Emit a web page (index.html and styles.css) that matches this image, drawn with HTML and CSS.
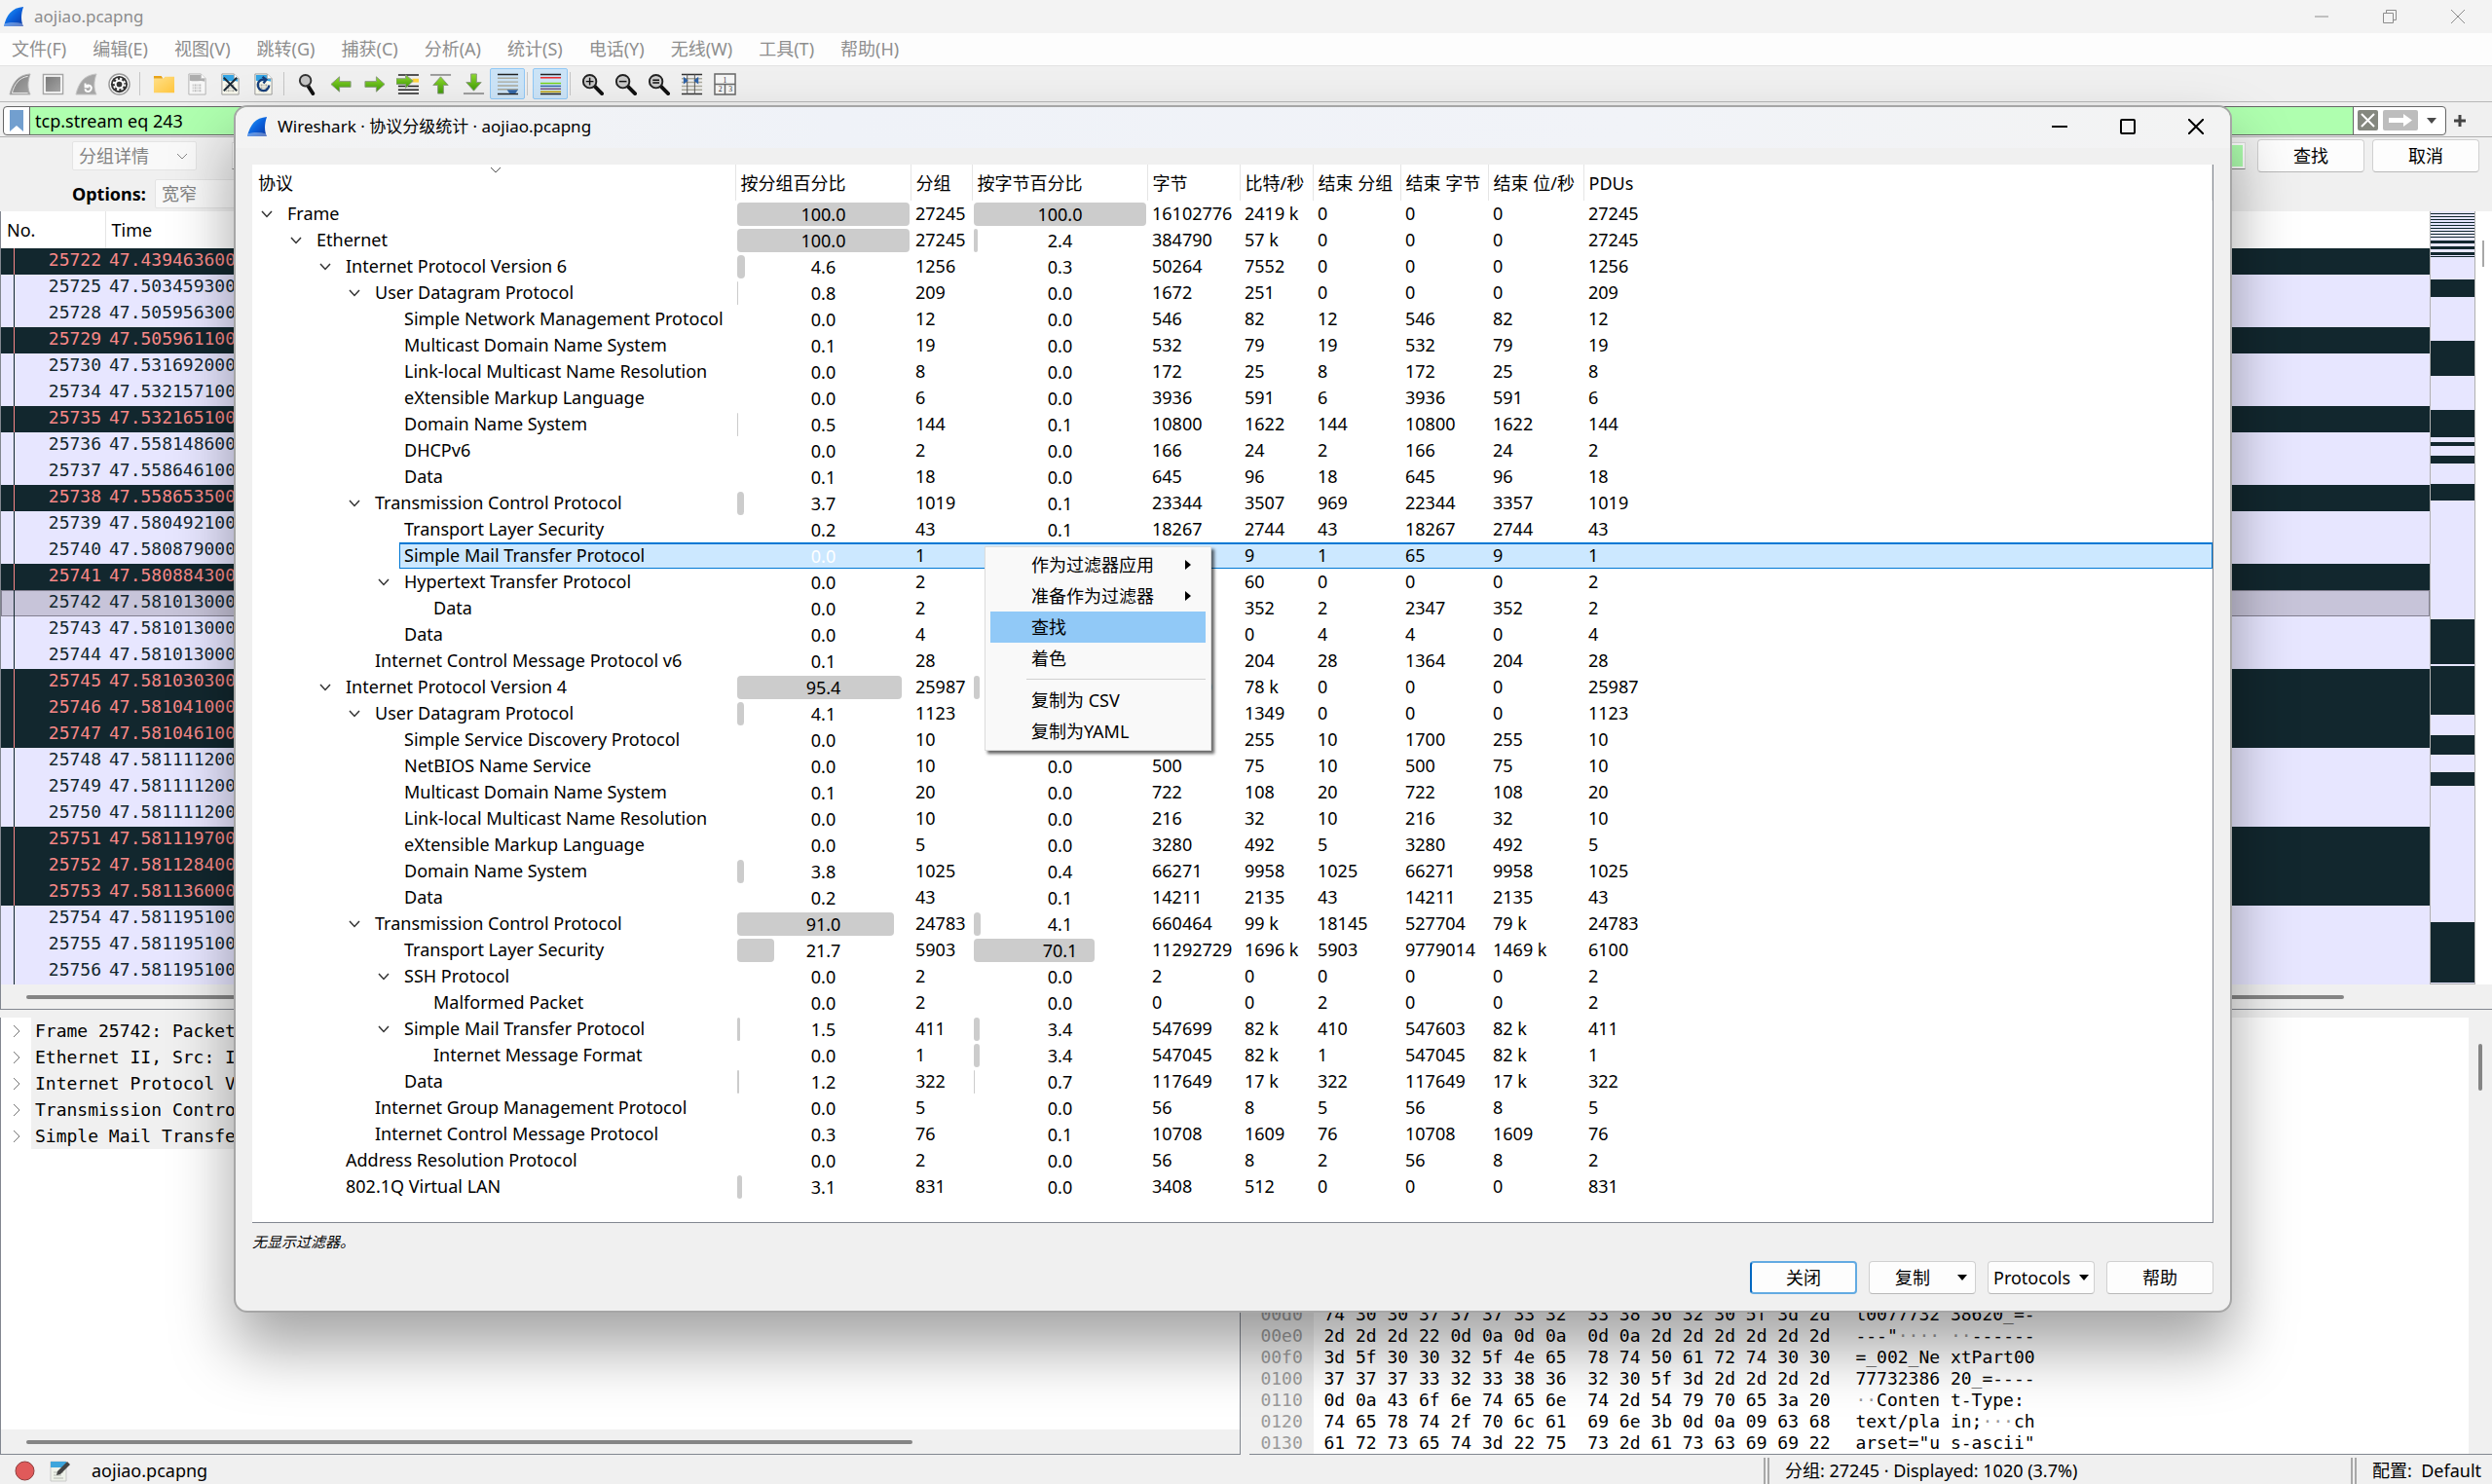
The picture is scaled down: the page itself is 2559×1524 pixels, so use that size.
FILE: index.html
```html
<!DOCTYPE html>
<html lang="zh-CN">
<head>
<meta charset="utf-8">
<title>aojiao.pcapng</title>
<link rel="stylesheet" href="styles.css">
<script src="app.js" defer></script>
</head>
<body>
<svg class="defs" width="0" height="0" aria-hidden="true">
  <defs>
    <linearGradient id="blue" x1="0" y1="0" x2="1" y2="1"><stop offset="0" stop-color="#29a8ff"/><stop offset=".5" stop-color="#0b62dd"/><stop offset="1" stop-color="#0b35a0"/></linearGradient>
    <linearGradient id="green" x1="0" y1="0" x2="0" y2="1"><stop offset="0" stop-color="#8edb2c"/><stop offset="1" stop-color="#3f9a08"/></linearGradient>
    <linearGradient id="gold" x1="0" y1="0" x2="1" y2="1"><stop offset="0" stop-color="#ffe08a"/><stop offset="1" stop-color="#ffc53d"/></linearGradient>
    <linearGradient id="grey" x1="0" y1="0" x2="1" y2="1"><stop offset="0" stop-color="#7a7a7a"/><stop offset="1" stop-color="#a4a4a4"/></linearGradient>
    <symbol id="fin" viewBox="0 0 24 24"><path d="M23 1C10 2 4 10 1 23h22c-3-6-3-14 0-22z" fill="url(#blue)"/><path d="M2 20c6-2 13-2 20 0l1 3H1z" fill="#fff" opacity=".35"/></symbol>
    <symbol id="mag" viewBox="0 0 24 24"><path d="M14 14l8 8" stroke="#111" stroke-width="4" stroke-linecap="round"/><circle cx="9" cy="9" r="7" fill="#c9c9c9" stroke="#222" stroke-width="2"/></symbol>
    <symbol id="doc" viewBox="0 0 24 24"><path d="M3 1h13l5 5v17H3z" fill="#fbfbef" stroke="#9a9a9a"/><path d="M4 2h12l4 4v3c-5-2-10 1-16-1z" fill="#35a5e5"/><path d="M16 1v5h5" fill="#fff" stroke="#aaa"/><path d="M7 13h10M7 16h10M7 19h10" stroke="#a8a8a0" stroke-width="2" stroke-dasharray="1 1 2 1"/></symbol>
  </defs>
</svg>

<main class="window">
  <header class="titlebar">
    <svg class="fin"><use href="#fin"/></svg>
    <h1>aojiao.pcapng</h1>
    <div class="controls">
      <button aria-label="最小化"><svg width="16" height="16" viewBox="0 0 16 16"><path d="M1 8h14"/></svg></button>
      <button aria-label="还原"><svg width="16" height="16" viewBox="0 0 16 16"><path d="M1.5 4.500h10v10h-10zM4.500 4V1.500h10v10H12"/></svg></button>
      <button aria-label="关闭"><svg width="16" height="16" viewBox="0 0 16 16"><path d="M1 1l14 14M15 1L1 15"/></svg></button>
    </div>
  </header>
  <nav class="menubar">
    <a href="#">文件(F)</a><a href="#">编辑(E)</a><a href="#">视图(V)</a><a href="#">跳转(G)</a><a href="#">捕获(C)</a><a href="#">分析(A)</a><a href="#">统计(S)</a><a href="#">电话(Y)</a><a href="#">无线(W)</a><a href="#">工具(T)</a><a href="#">帮助(H)</a>
  </nav>
  <div class="toolbar">
    <button aria-label="开始捕获"><svg viewBox="0 0 24 24"><path d="M23 1C10 2 4 10 1 23h22c-3-6-3-14 0-22z" fill="url(#grey)" stroke="#b4b4b4"/><path d="M20.500 3.500C11 5 6 12 3.500 21.500h17" fill="none" stroke="#eee"/></svg></button>
    <button aria-label="停止捕获"><svg viewBox="0 0 24 24"><path d="M1.500 1.500h21v21h-21z" fill="#fff" stroke="#a6a6a6" stroke-width="1.500"/><path d="M4 4h16v16H4z" fill="url(#grey)"/></svg></button>
    <button aria-label="重新捕获"><svg viewBox="0 0 24 24"><path d="M23 1C10 2 4 10 1 23h22c-3-6-3-14 0-22z" fill="#a6a6a6" stroke="#c4c4c4"/><path d="M11 11v4h4M11 15c3-4 8-1 6 3-2 3-6 2-6-1" fill="none" stroke="#fff" stroke-width="2"/></svg></button>
    <button aria-label="捕获选项"><svg viewBox="0 0 24 24"><circle cx="12" cy="12" r="11" fill="#fff" stroke="#999" stroke-width="1.500"/><circle cx="12" cy="12" r="9" fill="#333"/><circle cx="12" cy="12" r="4" fill="none" stroke="#fff" stroke-width="2"/><circle cx="12" cy="12" r="6" fill="none" stroke="#fff" stroke-width="2" stroke-dasharray="2.400 2.300"/></svg></button>
    <i class="sep"></i>
    <button aria-label="打开"><svg viewBox="0 0 24 24"><path d="M1 3h8l2 3H1z" fill="#e8a317"/><path d="M1 6l10 0 2-2h10v17H1z" fill="url(#gold)"/></svg></button>
    <button aria-label="保存"><svg class="faded" viewBox="0 0 24 24"><use href="#doc"/></svg></button>
    <button aria-label="关闭文件"><svg viewBox="0 0 24 24"><use href="#doc"/><path d="M5 5l14 14M19 5L5 19" stroke="#1c2b38" stroke-width="2"/></svg></button>
    <button aria-label="重新加载"><svg viewBox="0 0 24 24"><use href="#doc"/><path d="M18 13a6 6 0 1 1-5-6M11 4l4 3-3 4" fill="none" stroke="#173f7c" stroke-width="2.500"/></svg></button>
    <i class="sep"></i>
    <button aria-label="查找分组"><svg viewBox="0 0 24 24"><path d="M12 14l5 8" stroke="#111" stroke-width="4" stroke-linecap="round"/><circle cx="9" cy="8" r="6" fill="#c4c4c4" stroke="#333" stroke-width="2"/></svg></button>
    <button aria-label="后退"><svg viewBox="0 0 24 24"><path d="M1 12l9-8v5h12v6H10v5z" fill="url(#green)" stroke="#8a9a80"/></svg></button>
    <button aria-label="前进"><svg viewBox="0 0 24 24"><path d="M23 12l-9-8v5H2v6h12v5z" fill="url(#green)" stroke="#8a9a80"/></svg></button>
    <button aria-label="转到分组"><svg viewBox="0 0 24 24"><path d="M2 2h22M2 14h22M2 18h22M2 22h22" stroke="#222" stroke-width="1.500"/><path d="M17 6h7v4h-7z" fill="#ffd33d"/><path d="M18 8.500L10 2v4H0v6h10v4z" fill="url(#green)" stroke="#8a9a80"/></svg></button>
    <button aria-label="第一个分组"><svg viewBox="0 0 24 24"><path d="M1 2h22" stroke="#999" stroke-width="2"/><path d="M12 4l8 9h-5v9H9v-9H4z" fill="url(#green)" stroke="#8a9a80"/></svg></button>
    <button aria-label="最后一个分组"><svg viewBox="0 0 24 24"><path d="M1 22h22" stroke="#999" stroke-width="2"/><path d="M12 19l8-9h-5V1H9v9H4z" fill="url(#green)" stroke="#8a9a80"/></svg></button>
    <button class="on" aria-label="自动滚动"><svg viewBox="0 0 24 24"><path d="M1 1.500h22M1 22.500h22" stroke="#222" stroke-width="1.500"/><path d="M1 5.500h22M1 9.500h22M1 13.500h22M1 17.500h22" stroke="#aaa99c" stroke-width="1.500"/><path d="M11 18h12l-3 4h-6z" fill="#3465a4"/></svg></button>
    <i class="sep narrow"></i>
    <button class="on" aria-label="着色分组"><svg viewBox="0 0 24 24"><path d="M1 1.500h22M1 22.500h22" stroke="#222" stroke-width="1.500"/><path d="M1 5h22" stroke="#e22" stroke-width="1.500"/><path d="M1 11h22" stroke="#73d216" stroke-width="1.500"/><path d="M1 14h22" stroke="#3465a4" stroke-width="1.500"/><path d="M1 17h22" stroke="#75507b" stroke-width="1.500"/><path d="M1 20h22" stroke="#c4a000" stroke-width="1.500"/></svg></button>
    <i class="sep narrow"></i>
    <button aria-label="放大"><svg viewBox="0 0 24 24"><use href="#mag"/><path d="M5 9h8M9 5v8" stroke="#111" stroke-width="1.500"/></svg></button>
    <button aria-label="缩小"><svg viewBox="0 0 24 24"><use href="#mag"/><path d="M5 9h8" stroke="#111" stroke-width="1.500"/></svg></button>
    <button aria-label="原始大小"><svg viewBox="0 0 24 24"><use href="#mag"/><path d="M5.500 7.500h7M5.500 10.500h7" stroke="#111" stroke-width="1.500"/></svg></button>
    <button aria-label="调整列宽"><svg viewBox="0 0 24 24"><path d="M1 1.500h22M1 22.500h22" stroke="#333" stroke-width="1.500"/><path d="M1 6h22M1 10h22M1 14h22M1 18h22" stroke="#aaa99c" stroke-width="1.500"/><path d="M7 1v22M15 1v22" stroke="#555"/><path d="M3 4l5 4-5 4zM19 4l-5 4 5 4z" fill="#2f62a8"/></svg></button>
    <button aria-label="布局"><svg viewBox="0 0 24 24"><path d="M1 1h22v22H1zM1 12h22M12 12v11" fill="#f6f6f6" stroke="#666" stroke-width="1.500"/><g font-size="8" font-family="Liberation Serif, serif" fill="#333"><text x="10" y="10">1</text><text x="5" y="20">2</text><text x="16" y="20">3</text></g></svg></button>
  </div>

  <div class="filterbar">
    <div class="filterfield">
      <button class="bookmark" aria-label="书签"><svg width="14" height="22" viewBox="0 0 14 22"><path d="M0 0h14v22l-7-6-7 6z" fill="#729fcf"/></svg></button>
      <input type="text" value="tcp.stream eq 243" aria-label="显示过滤器">
      <button class="clear" aria-label="清除"><svg width="21" height="21" viewBox="0 0 21 21"><rect width="21" height="21" rx="2" fill="#85887f"/><path d="M4 4l13 13M17 4L4 17" stroke="#fff" stroke-width="2"/></svg></button>
      <button class="apply" aria-label="应用"><svg width="36" height="21" viewBox="0 0 36 21"><rect width="36" height="21" rx="2" fill="#bdbdbd"/><path d="M6 8h15V4l9 6.500-9 6.500v-4H6z" fill="#fff"/></svg></button>
      <button class="history" aria-label="历史"><svg width="10" height="6" viewBox="0 0 10 6"><path d="M0 0h10L5 6z" fill="#4a4a4a"/></svg></button>
    </div>
    <button class="plus" aria-label="添加"><svg width="12" height="12" viewBox="0 0 12 12"><path d="M6 0v12M0 6h12" stroke="#444" stroke-width="3"/></svg></button>
  </div>

  <div class="findbar">
    <div class="findrow">
      <select aria-label="查找范围" disabled><option>分组详情</option></select>
      <input class="findtext" type="text" aria-label="查找内容">
      <button class="btn">查找</button>
      <button class="btn">取消</button>
    </div>
    <div class="findrow">
      <label for="width-opt">Options:</label>
      <select id="width-opt" disabled><option>宽窄</option></select>
    </div>
  </div>

  <section class="packets">
    <div class="packetbody">
      <table class="packetlist">
        <thead><tr><th>No.</th><th>Time</th></tr></thead>
        <tbody id="packet-rows"></tbody>
      </table>
      <svg class="minimap" viewBox="0 0 45 793" preserveAspectRatio="none"><g fill="#12272e" id="minimap"></g></svg>
      <div class="vscroll"><i></i></div>
    </div>
    <div class="hscroll wide"><i></i></div>
  </section>

  <div class="panes">
    <section class="details">
      <ul>
        <li><span>Frame 25742: Packet</span></li>
        <li><span>Ethernet II, Src: In</span></li>
        <li><span>Internet Protocol Ve</span></li>
        <li><span>Transmission Control</span></li>
        <li><span>Simple Mail Transfer</span></li>
      </ul>
      <div class="hscroll short"><i></i></div>
    </section>
    <section class="bytes">
      <div class="hex" id="hex"></div>
      <div class="hexscroll"><i></i></div>
    </section>
  </div>

  <footer class="status">
    <svg width="21" height="21" viewBox="0 0 21 21"><circle cx="10.500" cy="10.500" r="9.500" fill="#e05a5a" stroke="#8f3b3b"/></svg>
    <svg width="22" height="22" viewBox="0 0 22 22"><path d="M1 1h16v20H1z" fill="#eef2ea" stroke="#c9c9c9"/><path d="M1 1h16v6H1z" fill="#3da5dc"/><path d="M4 12h10M4 15h8M4 18h10" stroke="#b4b8b0"/><path d="M7 15l1-4L18 1l3 3-10 10z" fill="#444"/></svg>
    <span class="file">aojiao.pcapng</span>
    <span class="counts">分组: 27245 · Displayed: 1020 (3.7%)</span>
    <span class="profile">配置:&nbsp; Default</span>
  </footer>
</main>

<div class="dialog" role="dialog" aria-labelledby="dlg-title">
  <header class="dlgtitle">
    <svg class="fin"><use href="#fin"/></svg>
    <h2 id="dlg-title">Wireshark · 协议分级统计 · aojiao.pcapng</h2>
    <div class="controls">
      <button aria-label="最小化"><svg width="16" height="16" viewBox="0 0 16 16"><path d="M0 8h16"/></svg></button>
      <button aria-label="最大化"><svg width="16" height="16" viewBox="0 0 16 16"><rect x="1" y="1" width="14" height="14" rx="1"/></svg></button>
      <button aria-label="关闭"><svg width="16" height="16" viewBox="0 0 16 16"><path d="M0 0l16 16M16 0L0 16"/></svg></button>
    </div>
  </header>
  <div class="dlgbody">
    <div class="tree">
      <table class="proto">
        <colgroup><col class="c-name"><col class="c-bar"><col class="c-pkt"><col class="c-bar"><col class="c-bytes"><col class="c-bits"><col class="c-end"><col class="c-end"><col class="c-endbits"><col></colgroup>
        <thead><tr><th class="sorted">协议<svg width="12" height="7" viewBox="0 0 12 7"><path d="M1 1l5 5 5-5" fill="none" stroke="#555"/></svg></th><th>按分组百分比</th><th>分组</th><th>按字节百分比</th><th>字节</th><th>比特/秒</th><th>结束 分组</th><th>结束 字节</th><th>结束 位/秒</th><th>PDUs</th></tr></thead>
        <tbody id="proto-rows"></tbody>
      </table>
    </div>
    <p class="note">无显示过滤器。</p>
    <div class="actions">
      <button class="btn primary">关闭</button>
      <button class="btn split"><span>复制</span><svg width="10" height="6" viewBox="0 0 10 6"><path d="M0 0h10L5 6z"/></svg></button>
      <button class="btn tight"><span>Protocols</span><svg width="10" height="6" viewBox="0 0 10 6"><path d="M0 0h10L5 6z"/></svg></button>
      <button class="btn">帮助</button>
    </div>
  </div>
</div>

<div class="ctx" role="menu">
  <button role="menuitem">作为过滤器应用<svg width="6" height="10" viewBox="0 0 6 10"><path d="M0 0v10l6-5z"/></svg></button>
  <button role="menuitem">准备作为过滤器<svg width="6" height="10" viewBox="0 0 6 10"><path d="M0 0v10l6-5z"/></svg></button>
  <button role="menuitem" class="active">查找</button>
  <button role="menuitem">着色</button>
  <hr>
  <button role="menuitem">复制为 CSV</button>
  <button role="menuitem">复制为YAML</button>
</div>
</body>
</html>
```

FILE: styles.css
```css
* { box-sizing: border-box; }
html, body { height: 100%; }
body {
  margin: 0;
  overflow: hidden;
  background: #f0f0f0;
  color: #000;
  font-family: "Noto Sans", "Noto Sans CJK SC", sans-serif;
  font-size: 18px;
  line-height: 26px;
}
button, input, select { font: inherit; color: inherit; margin: 0; padding: 0; border: 0; background: none; }
h1, h2, p, ul { margin: 0; padding: 0; font-weight: 400; }
.defs { position: absolute; }
.fin { width: 22px; height: 24px; }

.window { display: flex; flex-direction: column; height: 100vh; }

.titlebar, .dlgtitle { display: flex; align-items: center; }
.titlebar { height: 34px; padding-left: 3px; gap: 10px; background: #f3f3f3; color: #8c8c8c; }
.titlebar h1, .dlgtitle h2 { flex: 1; font-size: 17px; line-height: 26px; }
.controls { display: flex; }
.controls button { display: flex; width: 70px; justify-content: center; }
.controls svg { fill: none; stroke: currentColor; stroke-width: 1; }
.dialog .controls svg { stroke-width: 2; }

.menubar { display: flex; gap: 27px; height: 33px; padding: 3px 12px; background: #fdfdfd; }
.menubar a { color: #8e8e8e; text-decoration: none; }

.toolbar { display: flex; align-items: center; height: 38px; padding-left: 3px; background: #f0f0f0; border-bottom: 1px solid #b8b8b8; border-top: 1px solid #e3e3e3; }
.toolbar button { display: flex; flex: none; width: 34px; height: 34px; align-items: center; justify-content: center; }
.toolbar svg { width: 23px; height: 23px; }
.toolbar .faded { filter: grayscale(1); opacity: .7; }
.toolbar .on { width: 36px; height: 32px; background: #cce4f7; border: 1px solid #90c8f6; border-radius: 2px; }
.sep { width: 12px; height: 24px; background: linear-gradient(#c6c6c6, #c6c6c6) 4px center / 1px 100% no-repeat; }
.sep.narrow { width: 8px; background-position-x: 2px; }

.filterbar { display: flex; align-items: center; height: 36px; padding: 4px 27px 2px 3px; gap: 8px; border-bottom: 1px solid #b0b0b0; }
.filterfield { display: flex; flex: 1; align-items: center; height: 30px; background: #fff; border: 1px solid #666; border-radius: 4px; overflow: hidden; }
.filterfield input { flex: 1; height: 100%; padding: 0 5px; background: #afffaf; border: solid #666; border-width: 0 1px; }
.filterfield button { display: flex; justify-content: center; }
.bookmark { width: 26px; }
.clear { margin-left: 4px; }
.apply { margin-left: 5px; }
.history { width: 28px; }
.plus { display: flex; }

.findbar { display: flex; flex-direction: column; gap: 6px; height: 76px; padding: 1px 13px 0 74px; }
.findrow { display: flex; align-items: center; }
.findrow:first-child { height: 36px; gap: 8px; }
.findrow select { appearance: none; width: 128px; height: 30px; padding: 0 6px; background: #f9f9f9 url("data:image/svg+xml,%3Csvg xmlns='http://www.w3.org/2000/svg' width='12' height='7'%3E%3Cpath d='M1 1l5 5 5-5' fill='none' stroke='%23888'/%3E%3C/svg%3E") right 8px center no-repeat; border: 1px solid #e4e4e4; border-radius: 2px; color: #838383; opacity: 1; }
.findrow label { width: 85px; font-weight: 700; }
.findtext { flex: 1; height: 28px; margin: 0 4px 0 28px; background: #afffaf; border: 1px solid #ddd; border-bottom-color: #888; outline: 2px solid #fff; outline-offset: -3px; }
.btn { width: 110px; height: 34px; background: #fdfdfd; border: 1px solid #d0d0d0; border-bottom-color: #b8b8b8; border-radius: 4px; }

.packets { border: 1px solid #828790; border-width: 0 0 1px 1px; }
.packetbody { display: flex; background: #fff; }
.packetlist { flex: 1; border-collapse: collapse; table-layout: fixed; }
.packetlist th { height: 38px; padding: 0 6px; text-align: left; font-weight: 400; }
.packetlist th:first-child { width: 107px; border-right: 1px solid #e5e5e5; }
.packetlist td { height: 27px; padding: 0 4px 4px; font: 18px/22px "DejaVu Sans Mono", monospace; white-space: nowrap; }
.packetlist td:first-child { text-align: right; background: linear-gradient(currentColor, currentColor) 13px 0 / 1px 100% no-repeat; }
.packetlist tr.lite { background: #e7e6ff; color: #12272e; }
.packetlist tr.dark { background: #12272e; color: #f78787; }
.packetlist tr.current { background: #c7c4d9; box-shadow: inset 0 0 0 1px #827f90; }
.minimap { width: 47px; flex: none; height: 794px; background: #e7e6ff; border: 1px solid #b0b0b0; border-top: 0; }
.vscroll { width: 17px; padding: 30px 0 0 7px; }
.vscroll i { display: block; width: 2px; height: 27px; background: #a8a8a8; }
.hscroll { display: flex; flex: none; align-items: center; height: 25px; padding-left: 26px; background: #f0f0f0; }
.hscroll i { height: 4px; border-radius: 2px; background: #858585; }
.wide i { width: 94%; }
.short i { width: 73%; }

.panes { display: flex; flex: 1; min-height: 0; gap: 9px; padding-top: 8px; }
.details { display: flex; flex-direction: column; width: 49.8%; background: #fff; border: 1px solid #828790; border-top: 0; }
.details ul { flex: 1; min-height: 0; list-style: none; }
.details li { display: flex; font: 18px/27px "DejaVu Sans Mono", monospace; background: url("data:image/svg+xml,%3Csvg xmlns='http://www.w3.org/2000/svg' width='8' height='14'%3E%3Cpath d='M1 1l6 6-6 6' fill='none' stroke='%23777'/%3E%3C/svg%3E") 12px center no-repeat; padding-left: 31px; }
.details span { flex: 1; padding-left: 4px; background: #f0f0f0; }
.bytes { display: flex; flex: 1; background: #fff; border-bottom: 1px solid #828790; }
.hex { display: flex; flex: 1; flex-direction: column; justify-content: flex-end; background: linear-gradient(#f0f0f0, #f0f0f0) 0 0 / 66px 100% no-repeat; }
.hexrow { display: grid; grid-template-columns: 66px 556px 1fr; font: 18px/22px "DejaVu Sans Mono", monospace; white-space: pre; }
.hexrow span:first-child { padding-left: 11px; color: #9a9a9a; }
.hexrow span:nth-child(2) { padding-left: 10px; }
.hexrow i { font-style: normal; color: #999; }
.hexscroll { width: 24px; padding: 27px 0 0 10px; background: #f0f0f0; }
.hexscroll i { display: block; width: 4px; height: 48px; border-radius: 2px; background: #858585; }

.status { display: flex; flex: none; align-items: center; height: 30px; padding: 3px 0 0 15px; gap: 15px; line-height: 27px; }
.status .file { flex: 1; padding-left: 6px; }
.counts, .profile { flex: none; padding-left: 16px; border-left: 6px double #a8a8a8; white-space: nowrap; }
.counts { width: 588px; }
.profile { width: 145px; }

.dialog { position: absolute; top: 108px; left: 240px; right: 267px; border: 2px solid #a6a6a6; border-radius: 14px; background: #f0f0f0; background-clip: padding-box; box-shadow: 0 36px 64px rgba(0, 0, 0, .36); overflow: hidden; }
.dlgtitle { height: 42px; padding: 0 0 2px 11px; gap: 10px; background: linear-gradient(90deg, #f3f3f3, #eff2f8 30%, #f1f3f8 70%, #f3f3f3); }
.dlgbody { padding: 17px 17px 17px; }
.tree { padding-bottom: 23px; background: #fff; border: 1px solid #828790; border-width: 0 1px 1px 0; }
.proto { width: 100%; border-collapse: collapse; table-layout: fixed; }
.c-name { width: 496px; } .c-bar { width: 180px; } .c-pkt { width: 63px; } .c-bytes { width: 95px; }
.c-bits { width: 75px; } .c-end { width: 90px; } .c-endbits { width: 98px; }
.proto th { height: 37px; padding: 1px 5px 0; text-align: left; font-weight: 400; white-space: nowrap; border-right: 1px solid #e5e5e5; }
.proto td { height: 27px; padding: 0 5px; line-height: 27px; white-space: nowrap; }
.proto th.sorted { position: relative; padding-left: 6px; }
.sorted svg { position: absolute; top: 2px; left: calc(50% - 4px); }
.proto td.name { padding: 0; }
.name div { display: flex; }
.name .lead { width: calc(9px + 30px * var(--level)); }
.name .twisty { display: flex; width: 22px; align-items: center; }
.name .label { flex: 1; padding-left: 5px; }
.proto td.pct { padding: 0 1px 0 2px; }
.pct div { position: relative; z-index: 0; height: 24px; line-height: 24px; text-align: center; }
.pct i { position: absolute; z-index: -1; inset: 0 auto 0 0; background: #ccc; border-radius: 4px; }
.sel td:not(.name), .sel .label { background: #cce8ff; box-shadow: inset 0 2px #0078d4, inset 0 -1px #0078d4; }
.sel .label { border-left: 1px solid #0078d4; padding-left: 4px; }
.proto .sel td:last-child { border-right: 1px solid #0078d4; }
.sel .pct { color: #fff; }
.note { padding-top: 9px; font-size: 15px; line-height: 20px; font-style: italic; }
.actions { display: flex; justify-content: flex-end; gap: 12px; padding-top: 10px; }
.primary { border: 2px solid #62aae2; border-left-color: #0067c0; }
.split, .tight { display: flex; align-items: center; }
.split { padding: 0 8px 0 26px; justify-content: space-between; }
.tight { padding: 0 5px; justify-content: space-between; }

.ctx { position: absolute; top: 561px; left: 1011px; width: 233px; padding: 2px 5px 3px; background: #f9f9f9; border: 1px solid #dcdcdc; box-shadow: 3px 3px 3px rgba(0, 0, 0, .6); }
.ctx button { display: flex; width: 100%; height: 32px; align-items: center; justify-content: space-between; padding: 0 15px 0 42px; }
.ctx .active { background: #91c9f7; }
.ctx hr { height: 1px; margin: 5px 0 5px 37px; border: 0; background: #d0d0d0; }
```

FILE: app.js
```js
// level, expandable, name, packet %, packets, byte %, bytes, bits/s, end packets, end bytes, end bits/s, PDUs
const protocols = [
  [0, 1, 'Frame', '100.0', 27245, '100.0', 16102776, '2419 k', 0, 0, 0, 27245],
  [1, 1, 'Ethernet', '100.0', 27245, '2.4', 384790, '57 k', 0, 0, 0, 27245],
  [2, 1, 'Internet Protocol Version 6', '4.6', 1256, '0.3', 50264, 7552, 0, 0, 0, 1256],
  [3, 1, 'User Datagram Protocol', '0.8', 209, '0.0', 1672, 251, 0, 0, 0, 209],
  [4, 0, 'Simple Network Management Protocol', '0.0', 12, '0.0', 546, 82, 12, 546, 82, 12],
  [4, 0, 'Multicast Domain Name System', '0.1', 19, '0.0', 532, 79, 19, 532, 79, 19],
  [4, 0, 'Link-local Multicast Name Resolution', '0.0', 8, '0.0', 172, 25, 8, 172, 25, 8],
  [4, 0, 'eXtensible Markup Language', '0.0', 6, '0.0', 3936, 591, 6, 3936, 591, 6],
  [4, 0, 'Domain Name System', '0.5', 144, '0.1', 10800, 1622, 144, 10800, 1622, 144],
  [4, 0, 'DHCPv6', '0.0', 2, '0.0', 166, 24, 2, 166, 24, 2],
  [4, 0, 'Data', '0.1', 18, '0.0', 645, 96, 18, 645, 96, 18],
  [3, 1, 'Transmission Control Protocol', '3.7', 1019, '0.1', 23344, 3507, 969, 22344, 3357, 1019],
  [4, 0, 'Transport Layer Security', '0.2', 43, '0.1', 18267, 2744, 43, 18267, 2744, 43],
  [4, 0, 'Simple Mail Transfer Protocol', '0.0', 1, '', '', 9, 1, 65, 9, 1],
  [4, 1, 'Hypertext Transfer Protocol', '0.0', 2, '', '', 60, 0, 0, 0, 2],
  [5, 0, 'Data', '0.0', 2, '', '', 352, 2, 2347, 352, 2],
  [4, 0, 'Data', '0.0', 4, '', '', 0, 4, 4, 0, 4],
  [3, 0, 'Internet Control Message Protocol v6', '0.1', 28, '', '', 204, 28, 1364, 204, 28],
  [2, 1, 'Internet Protocol Version 4', '95.4', 25987, '3.2', 519740, '78 k', 0, 0, 0, 25987],
  [3, 1, 'User Datagram Protocol', '4.1', 1123, '', '', 1349, 0, 0, 0, 1123],
  [4, 0, 'Simple Service Discovery Protocol', '0.0', 10, '', '', 255, 10, 1700, 255, 10],
  [4, 0, 'NetBIOS Name Service', '0.0', 10, '0.0', 500, 75, 10, 500, 75, 10],
  [4, 0, 'Multicast Domain Name System', '0.1', 20, '0.0', 722, 108, 20, 722, 108, 20],
  [4, 0, 'Link-local Multicast Name Resolution', '0.0', 10, '0.0', 216, 32, 10, 216, 32, 10],
  [4, 0, 'eXtensible Markup Language', '0.0', 5, '0.0', 3280, 492, 5, 3280, 492, 5],
  [4, 0, 'Domain Name System', '3.8', 1025, '0.4', 66271, 9958, 1025, 66271, 9958, 1025],
  [4, 0, 'Data', '0.2', 43, '0.1', 14211, 2135, 43, 14211, 2135, 43],
  [3, 1, 'Transmission Control Protocol', '91.0', 24783, '4.1', 660464, '99 k', 18145, 527704, '79 k', 24783],
  [4, 0, 'Transport Layer Security', '21.7', 5903, '70.1', 11292729, '1696 k', 5903, 9779014, '1469 k', 6100],
  [4, 1, 'SSH Protocol', '0.0', 2, '0.0', 2, 0, 0, 0, 0, 2],
  [5, 0, 'Malformed Packet', '0.0', 2, '0.0', 0, 0, 2, 0, 0, 2],
  [4, 1, 'Simple Mail Transfer Protocol', '1.5', 411, '3.4', 547699, '82 k', 410, 547603, '82 k', 411],
  [5, 0, 'Internet Message Format', '0.0', 1, '3.4', 547045, '82 k', 1, 547045, '82 k', 1],
  [4, 0, 'Data', '1.2', 322, '0.7', 117649, '17 k', 322, 117649, '17 k', 322],
  [3, 0, 'Internet Group Management Protocol', '0.0', 5, '0.0', 56, 8, 5, 56, 8, 5],
  [3, 0, 'Internet Control Message Protocol', '0.3', 76, '0.1', 10708, 1609, 76, 10708, 1609, 76],
  [2, 0, 'Address Resolution Protocol', '0.0', 2, '0.0', 56, 8, 2, 56, 8, 2],
  [2, 0, '802.1Q Virtual LAN', '3.1', 831, '0.0', 3408, 512, 0, 0, 0, 831]
];
const SELECTED = 13;
const chevron = '<svg width="12" height="8" viewBox="0 0 12 8"><path d="M1 1l5 5.500L11 1" fill="none" stroke="#333" stroke-width="1.500"/></svg>';
const pct = v => `<td class="pct"><div>${+v >= 0.5 ? `<i style="width:${v}%"></i>` : ''}${v}</div></td>`;

document.getElementById('proto-rows').innerHTML = protocols.map(([level, open, name, pp, pk, bp, ...rest], i) =>
  `<tr${i === SELECTED ? ' class="sel"' : ''}><td class="name"><div><span class="lead" style="--level:${level}"></span><span class="twisty">${open ? chevron : ''}</span><span class="label">${name}</span></div></td>` +
  pct(pp) + `<td>${pk}</td>` + pct(bp) + rest.map(v => `<td>${v}</td>`).join('') + '</tr>').join('');

// number, time, row style
const packets = `25722 47.439463600 dark
25725 47.503459300 lite
25728 47.505956300 lite
25729 47.505961100 dark
25730 47.531692000 lite
25734 47.532157100 lite
25735 47.532165100 dark
25736 47.558148600 lite
25737 47.558646100 lite
25738 47.558653500 dark
25739 47.580492100 lite
25740 47.580879000 lite
25741 47.580884300 dark
25742 47.581013000 lite,current
25743 47.581013000 lite
25744 47.581013000 lite
25745 47.581030300 dark
25746 47.581041000 dark
25747 47.581046100 dark
25748 47.581111200 lite
25749 47.581111200 lite
25750 47.581111200 lite
25751 47.581119700 dark
25752 47.581128400 dark
25753 47.581136000 dark
25754 47.581195100 lite
25755 47.581195100 lite
25756 47.581195100 lite`.split('\n').map(line => line.split(' '));
document.getElementById('packet-rows').innerHTML = packets.map(([no, time, cls]) =>
  `<tr class="${cls.replace(',', ' ')}"><td>${no}</td><td>${time}</td></tr>`).join('');

// start and height of each dark band in the overview strip
const bands = [[30, 3], [36, 3], [42, 3], [46, 1], [70, 18], [133, 36], [204, 28], [237, 4], [251, 8], [280, 17], [419, 46], [467, 50], [538, 20], [576, 14], [730, 62]];
for (let y = 2; y <= 26; y += 3) bands.push([y, 1]);
document.getElementById('minimap').innerHTML = bands.map(([y, h]) => `<rect y="${y}" width="45" height="${h}"/>`).join('');

// the byte view is scrolled so that its first visible line starts at FIRST
const FIRST = 0xd0;
const payload = 't007773238620_=----"\r\n\r\n\r\n------=_002_NextPart007773238620_=----\r\nContent-Type: text/plain;\r\n\tcharset="us-ascii"';
let out = '';
for (let p = 0; p < payload.length; p += 16) {
  const row = [...payload.slice(p, p + 16)];
  const hex = row.map(c => c.charCodeAt(0).toString(16).padStart(2, '0'));
  const chars = row.map(c => c < ' ' ? '<i>·</i>' : c);
  out += `<div class="hexrow"><span>${(FIRST + p).toString(16).padStart(4, '0')}</span><span>${hex.slice(0, 8).join(' ')}  ${hex.slice(8).join(' ')}</span><span>${chars.slice(0, 8).join('')} ${chars.slice(8).join('')}</span></div>`;
}
document.getElementById('hex').innerHTML = out;
```
